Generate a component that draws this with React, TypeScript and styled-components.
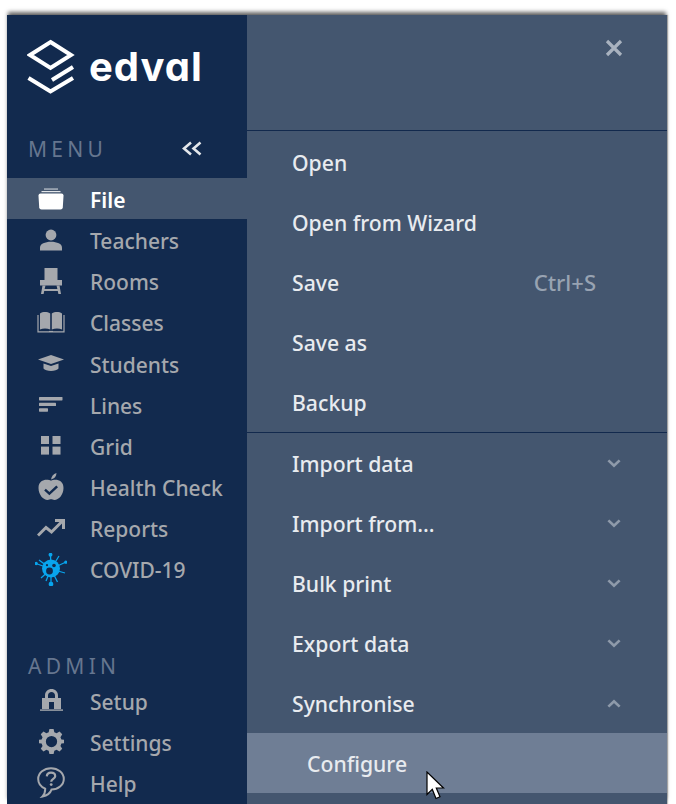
import * as React from 'react'
import styled, { createGlobalStyle } from 'styled-components'

const GRAY = '#a5a8ad'

const GlobalStyle = createGlobalStyle`
	html, body {
		margin: 0;
		padding: 0;
		background: #ffffff;
		height: 100%;
		overflow: hidden;
	}
	body {
		font-family: 'Noto Sans', 'Open Sans', sans-serif;
	}
`

const Logo = () => (
	<svg width="48" height="57" viewBox="0 0 48 57" fill="none" stroke="#fff" strokeWidth="4">
		<path d="M23.5 3 L44 16 L23.5 29 L3 16 Z" />
		<path d="M1.5 39 L23.5 52.5 L46 39" />
		<path d="M25 41 L46 28" />
	</svg>
)

const FileIcon = () => (
	<svg width="26" height="22" viewBox="0 0 26 22" fill="currentColor">
		<path d="M6 0.5 H20 V1.6 H6 Z" opacity="0.75" />
		<path d="M3.5 3 H22.5 V4.2 H3.5 Z" opacity="0.85" />
		<path d="M2.5 5.4 H23.5 Q25.5 5.4 25.5 7.5 L24.8 19.5 Q24.6 21.5 22.5 21.5 H3.5 Q1.4 21.5 1.2 19.5 L0.5 7.5 Q0.5 5.4 2.5 5.4 Z" />
	</svg>
)

const TeacherIcon = () => (
	<svg width="22" height="22" viewBox="0 0 22 22" fill="currentColor">
		<circle cx="11" cy="6" r="5.4" />
		<path d="M0 21.5 V18.5 C0 15 5 12.8 11 12.8 C17 12.8 22 15 22 18.5 V21.5 Z" />
	</svg>
)

const ChairIcon = () => (
	<svg width="22" height="26" viewBox="0 0 22 26" fill="currentColor">
		<path d="M4.5 0 H17.5 V12 H22 V17.5 H0 V12 H4.5 Z" />
		<path d="M2.5 17.5 H5.5 L4.6 21 H17.4 L16.5 17.5 H19.5 L21 26 H18.4 L17.8 23 H4.2 L3.6 26 H1 Z" />
	</svg>
)

const BookIcon = () => (
	<svg width="28" height="21" viewBox="0 0 28 21" fill="currentColor">
		<path d="M3 1.5 C6 -0.4 10 -0.4 13.2 1.5 V17.6 C10 16 6 16 3 17.6 Z" />
		<path d="M14.8 1.5 C18 -0.4 22 -0.4 25 1.5 V17.6 C22 16 18 16 14.8 17.6 Z" />
		<path d="M0.4 3 H1.6 V19.2 H12 V20.5 H0.4 Z" />
		<path d="M27.6 3 H26.4 V19.2 H16 V20.5 H27.6 Z" />
		<path d="M12 18.9 H16 V20.5 H12 Z" />
	</svg>
)

const CapIcon = () => (
	<svg width="26" height="17" viewBox="0 0 26 17" fill="currentColor">
		<path d="M13 0 L26 4.5 L13 9 L0 4.5 Z" />
		<path d="M5.5 8.4 L13 11 L20.5 8.4 V13.5 C18.5 16.8 7.5 16.8 5.5 13.5 Z" />
	</svg>
)

const LinesIcon = () => (
	<svg width="24" height="15" viewBox="0 0 24 15" fill="currentColor">
		<rect x="0" y="0" width="23.5" height="3.4" rx="0.6" />
		<rect x="0" y="5.7" width="17" height="3.4" rx="0.6" />
		<rect x="0" y="11.3" width="9" height="3.4" rx="0.6" />
	</svg>
)

const GridIcon = () => (
	<svg width="20" height="19" viewBox="0 0 20 19" fill="currentColor">
		<rect x="0" y="0" width="8" height="8" />
		<rect x="11.5" y="0" width="8" height="8" />
		<rect x="0" y="10.6" width="8" height="8" />
		<rect x="11.5" y="10.6" width="8" height="8" />
	</svg>
)

const AppleIcon = () => (
	<svg width="26" height="27" viewBox="0 0 26 27" fill="currentColor">
		<path d="M13 6.5 C13.5 3.5 15 1.2 18.5 0 C18.4 3.4 16.6 5.5 13 6.5 Z" />
		<path
			fillRule="evenodd"
			d="M13 7.8 C16.5 5.8 25.5 6 25.5 15 C25.5 22 20.5 27 16.5 27 C15 27 14 26.3 13 26.3 C12 26.3 11 27 9.5 27 C5.5 27 0.5 22 0.5 15 C0.5 6 9.5 5.8 13 7.8 Z M18.3 12.6 L11.4 19 L7.8 15.7 L6.2 17.4 L11.4 22.2 L20 14.3 Z"
		/>
	</svg>
)

const TrendIcon = () => (
	<svg width="28" height="18" viewBox="0 0 28 18" fill="none" stroke="currentColor" strokeWidth="3">
		<path d="M1 16.5 L9 8.5 L14.5 13 L25 2.5" />
		<path d="M18 1.5 H26.5 V10" />
	</svg>
)

const VirusIcon = () => (
	<svg width="32" height="33" viewBox="0 0 32 33" fill="none" stroke="#08a5ee" strokeWidth="1.3">
		<path d="M16 16 L15.5 1.5 M16 16 L4 7 M16 16 L1 10.5 M16 16 L24 3 M16 16 L31 9 M16 16 L30 20 M16 16 L22.5 29 M16 16 L16 31 M16 16 L6 25 M16 16 L11 28" />
		<circle cx="15.5" cy="1.7" r="1.3" fill="#08a5ee" />
		<circle cx="16" cy="31" r="1.7" fill="#08a5ee" />
		<circle cx="1.2" cy="10.5" r="1" fill="#08a5ee" />
		<circle cx="30.8" cy="9.2" r="1" fill="#08a5ee" />
		<circle cx="16" cy="15.5" r="9" fill="#08a5ee" stroke="none" />
		<circle cx="14.5" cy="18" r="3.4" fill="#12294d" stroke="none" />
		<circle cx="19" cy="12.5" r="1.8" fill="#12294d" stroke="none" />
		<circle cx="12" cy="12.2" r="1.1" fill="#12294d" stroke="none" />
	</svg>
)

const LockIcon = () => (
	<svg width="23" height="22" viewBox="0 0 23 22" fill="currentColor">
		<path
			fillRule="evenodd"
			d="M2 9 H5 V6.5 C5 2.5 8 0 11.5 0 C15 0 18 2.5 18 6.5 V9 H21 V20 H2 Z M8 9 H15 V6.5 C15 4.4 13.4 3 11.5 3 C9.6 3 8 4.4 8 6.5 Z M9 13 V20 H14 V13 Z"
		/>
		<rect x="0" y="20.4" width="23" height="1.4" />
	</svg>
)

const GearIcon = () => (
	<svg width="25" height="25" viewBox="0 0 24 24" fill="currentColor">
		<path
			fillRule="evenodd"
			d="M10 0 H14 L14.7 3.2 L16.9 4.1 L19.7 2.4 L22.3 5 L20.6 7.8 L21.5 10 L24 10.4 V13.6 L21.5 14 L20.6 16.2 L22.3 19 L19.7 21.6 L16.9 19.9 L14.7 20.8 L14 24 H10 L9.3 20.8 L7.1 19.9 L4.3 21.6 L1.7 19 L3.4 16.2 L2.5 14 L0 13.6 V10.4 L2.5 10 L3.4 7.8 L1.7 5 L4.3 2.4 L7.1 4.1 L9.3 3.2 Z M12 6.6 A5.4 5.4 0 1 0 12 17.4 A5.4 5.4 0 1 0 12 6.6 Z"
		/>
	</svg>
)

const HelpIcon = () => (
	<svg width="28" height="31" viewBox="0 0 28 31" fill="none" stroke="currentColor" strokeWidth="2">
		<path d="M14 1.2 C21 1.2 26.8 6 26.8 12 C26.8 18 21 22.6 14.5 22.6 C13.5 25.5 10.5 28.5 5.5 29.5 C7.5 27.5 8.3 24.8 8.2 21.6 C3.8 19.8 1.2 16 1.2 12 C1.2 6 7 1.2 14 1.2 Z" />
		<path d="M9.8 9.3 C10 6.9 11.8 5.7 14 5.7 C16.4 5.7 18.2 7 18.2 9.2 C18.2 11.8 14.2 12 14.2 14.8" strokeWidth="2.2" />
		<circle cx="14.2" cy="17.6" r="1.4" fill="currentColor" stroke="none" />
	</svg>
)

const Chevron = ({ up }: { up?: boolean }) => (
	<ChevronSvg viewBox="0 0 12 8" fill="none" stroke="currentColor" strokeWidth="2.4">
		<path d={up ? 'M1 6.8 L6 2 L11 6.8' : 'M1 1.2 L6 6 L11 1.2'} />
	</ChevronSvg>
)

const Cursor = () => (
	<CursorSvg viewBox="0 0 19 30">
		<path d="M1 1 V23.5 L6.3 18.4 L10 27.5 L14 25.8 L10.3 17 H17.5 Z" fill="#fff" stroke="#000" strokeWidth="1.2" />
	</CursorSvg>
)

const nav = [
	{ label: 'File', icon: <FileIcon />, active: true },
	{ label: 'Teachers', icon: <TeacherIcon /> },
	{ label: 'Rooms', icon: <ChairIcon /> },
	{ label: 'Classes', icon: <BookIcon /> },
	{ label: 'Students', icon: <CapIcon /> },
	{ label: 'Lines', icon: <LinesIcon /> },
	{ label: 'Grid', icon: <GridIcon /> },
	{ label: 'Health Check', icon: <AppleIcon /> },
	{ label: 'Reports', icon: <TrendIcon /> },
	{ label: 'COVID-19', icon: <VirusIcon /> },
]

const admin = [
	{ label: 'Setup', icon: <LockIcon /> },
	{ label: 'Settings', icon: <GearIcon /> },
	{ label: 'Help', icon: <HelpIcon /> },
]

export default function App() {
	return (
		<>
			<GlobalStyle />
			<Page>
				<Window>
					<Sidebar>
						<Brand>
							<Logo />
							<BrandName>edval</BrandName>
						</Brand>
						<SectionHead>
							<SectionLabel>MENU</SectionLabel>
							<Collapse viewBox="0 0 20 15" fill="none" stroke="#e4e7eb" strokeWidth="2.6">
								<path d="M9 1.5 L2 7.5 L9 13.5 M18.5 1.5 L11.5 7.5 L18.5 13.5" />
							</Collapse>
						</SectionHead>
						<NavList>
							{nav.map((item) => (
								<NavRow key={item.label} $active={item.active}>
									<NavIcon>{item.icon}</NavIcon>
									<NavLabel>{item.label}</NavLabel>
								</NavRow>
							))}
						</NavList>
						<AdminHead>
							<SectionLabel>ADMIN</SectionLabel>
						</AdminHead>
						<NavList>
							{admin.map((item) => (
								<NavRow key={item.label}>
									<NavIcon>{item.icon}</NavIcon>
									<NavLabel>{item.label}</NavLabel>
								</NavRow>
							))}
						</NavList>
					</Sidebar>
					<Panel>
						<PanelTop>
							<CloseIcon viewBox="0 0 18 18" fill="none" stroke="#a9b2bf" strokeWidth="3.2">
								<path d="M2 2 L16 16 M16 2 L2 16" />
							</CloseIcon>
						</PanelTop>
						<FileGroup>
							<MenuRow>Open</MenuRow>
							<MenuRow>Open from Wizard</MenuRow>
							<MenuRow>
								Save<Shortcut>Ctrl+S</Shortcut>
							</MenuRow>
							<MenuRow>Save as</MenuRow>
							<MenuRow>Backup</MenuRow>
						</FileGroup>
						<MenuGroup>
							<MenuRow>
								Import data
								<Chevron />
							</MenuRow>
							<MenuRow>
								Import from...
								<Chevron />
							</MenuRow>
							<MenuRow>
								Bulk print
								<Chevron />
							</MenuRow>
							<MenuRow>
								Export data
								<Chevron />
							</MenuRow>
							<MenuRow>
								Synchronise
								<Chevron up />
							</MenuRow>
							<SubRow>
								Configure
								<Cursor />
							</SubRow>
						</MenuGroup>
					</Panel>
				</Window>
			</Page>
		</>
	)
}

const Page = styled.div`
	height: 804px;
	box-sizing: border-box;
	padding: 15px 9px 0 7px;
	overflow: hidden;
`

const Window = styled.div`
	display: flex;
	height: 789px;
	box-shadow: 0 -4px 4px -1px rgba(0, 0, 0, 0.6), 1px 0 1px rgba(0, 0, 0, 0.25);
`

const Sidebar = styled.aside`
	width: 240px;
	flex: none;
	background: #122a4e;
	display: flex;
	flex-direction: column;
`

const Brand = styled.div`
	height: 112px;
	flex: none;
	box-sizing: border-box;
	padding: 24px 0 0 20px;
	display: flex;
	align-items: flex-start;
	gap: 14px;
`

const BrandName = styled.span`
	font-family: 'Inter', sans-serif;
	font-feature-settings: 'cv11';
	font-weight: 700;
	font-size: 40px;
	line-height: 56px;
	color: #ffffff;
	letter-spacing: 1px;
`

const SectionHead = styled.div`
	height: 51px;
	flex: none;
	box-sizing: border-box;
	padding: 0 0 8px 21px;
	display: flex;
	align-items: center;
`

const AdminHead = styled(SectionHead)`
	height: 28px;
	padding-bottom: 0;
	margin-top: 62px;
`

const SectionLabel = styled.span`
	font-size: 21px;
	font-weight: 400;
	letter-spacing: 4.3px;
	color: #66768f;
`

const Collapse = styled.svg`
	width: 20px;
	height: 15px;
	margin-left: 75px;
`

const NavList = styled.div`
	display: flex;
	flex: none;
	flex-direction: column;
`

const NavRow = styled.div<{ $active?: boolean }>`
	height: 41.2px;
	display: flex;
	align-items: center;
	font-size: 21px;
	font-weight: ${(p) => (p.$active ? 600 : 500)};
	color: ${(p) => (p.$active ? '#ffffff' : GRAY)};
	background: ${(p) => (p.$active ? '#44566f' : 'transparent')};
`

const NavIcon = styled.span`
	width: 36px;
	margin: 0 21px 0 26px;
	display: flex;
	justify-content: center;
	align-items: center;
`

const NavLabel = styled.span`
	margin-top: 2.4px;
`

const Panel = styled.section`
	flex: 1;
	background: #44566f;
	display: flex;
	flex-direction: column;
`

const PanelTop = styled.div`
	flex: none;
	border-bottom: 1px solid #12294d;
	box-sizing: border-box;
	height: 116px;
	display: flex;
	justify-content: flex-end;
	padding: 24px 44px 0 0;
`

const CloseIcon = styled.svg`
	width: 18px;
	height: 18px;
`

const MenuRow = styled.div`
	height: 60px;
	box-sizing: border-box;
	display: flex;
	align-items: center;
	justify-content: space-between;
	padding: 1px 46px 0 45px;
	font-size: 21.2px;
	font-weight: 500;
	color: #e8ebef;
`

const MenuGroup = styled.div`
	display: flex;
	flex: none;
	flex-direction: column;
`

const FileGroup = styled(MenuGroup)`
	padding-bottom: 1px;
	border-bottom: 1px solid #12294d;

	${MenuRow} {
		padding-top: 3px;
	}
`

const Shortcut = styled.span`
	color: #98a3b2;
	font-weight: 500;
	font-size: 22px;
	margin: 0 25px 2px 0;
`

const ChevronSvg = styled.svg`
	width: 14px;
	height: 9px;
	margin-top: -1px;
	color: #8e9aaa;
`

const SubRow = styled(MenuRow)`
	background: #6f7e95;
	padding-left: 60px;
	justify-content: flex-start;
	position: relative;
`

const CursorSvg = styled.svg`
	position: absolute;
	left: 179px;
	top: 38px;
	width: 19px;
	height: 30px;
`
